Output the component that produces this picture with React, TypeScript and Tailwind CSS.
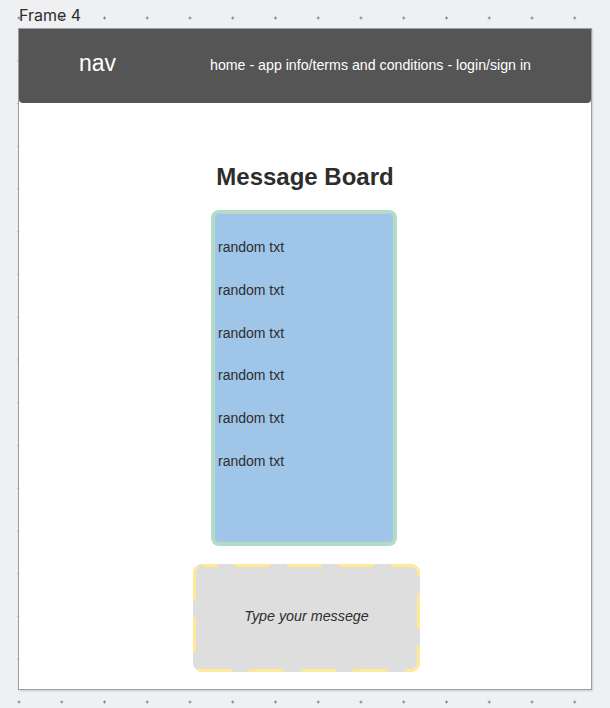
const messages = [
  "random txt",
  "random txt",
  "random txt",
  "random txt",
  "random txt",
  "random txt",
];

function DashedOutline() {
  // Figma-style long dashes; CSS border-dashed is too short for this
  return (
    <svg
      className="pointer-events-none absolute inset-0 h-full w-full"
      viewBox="0 0 227 108"
      fill="none"
      aria-hidden="true"
    >
      <rect
        x="1.5"
        y="1.5"
        width="224"
        height="105"
        rx="8"
        stroke="#ffe996"
        strokeWidth="3"
        strokeDasharray="35 17"
        strokeDashoffset="19.5"
      />
    </svg>
  );
}

export default function App() {
  return (
    <div className="h-[708px] w-[610px] overflow-hidden bg-[#eff0f2] bg-[radial-gradient(circle,#7d828a_1px,transparent_1.3px)] bg-[size:42.75px_42.75px] bg-[position:-2.4px_-3.4px] font-['Liberation_Sans',Arial,sans-serif]">
      {/* Frame label */}
      <div className="h-[28px] pl-[19px] pt-[5px] font-['Inter',sans-serif] text-[16px] leading-[20px] text-[#2d2d2d]">
        Frame 4
      </div>

      {/* Frame */}
      <div className="ml-[18px] h-[662px] w-[574px] border border-[#9a9da2] bg-white shadow-[1px_1px_2px_rgba(0,0,0,0.15)]">
        <nav className="flex h-[74px] items-center rounded-b-[4px] bg-[#555555] pl-[60px] text-white">
          <span className="w-[131px] pb-[6px] text-[23px]">nav</span>
          <span className="text-[14.2px]">
            home - app info/terms and conditions - login/sign in
          </span>
        </nav>

        <h1 className="mt-[58px] text-center text-[24px] font-bold leading-[32px] text-[#2d2d2d]">
          Message Board
        </h1>

        {/* Board */}
        <div className="ml-[192px] mt-[17px] h-[336px] w-[186px] rounded-[8px] border-4 border-[#b4dcc5] bg-[#9fc5e8] pl-[3px] pt-[12px]">
          {messages.map((m, i) => (
            <p key={i} className="text-[14px] leading-[42.8px] text-[#2d2d2d]">
              {m}
            </p>
          ))}
        </div>

        {/* Message input */}
        <div className="relative ml-[174px] mt-[18px] flex h-[108px] w-[227px] items-center justify-center rounded-[9px] bg-[#dedede]">
          <span className="pb-[2px] text-[14.3px] italic text-[#2d2d2d]">
            Type your messege
          </span>
          <DashedOutline />
        </div>
      </div>
    </div>
  );
}
